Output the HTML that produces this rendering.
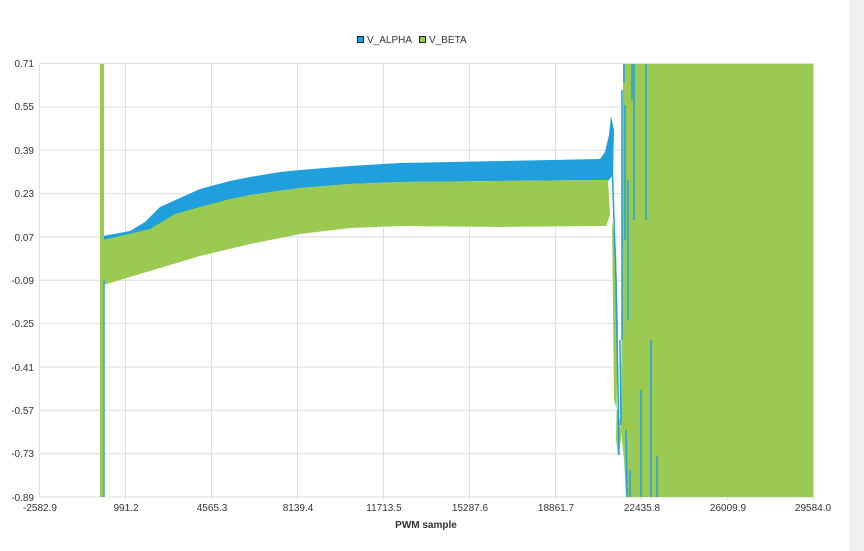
<!DOCTYPE html>
<html><head><style>
body{margin:0;width:864px;height:551px;background:#fff;overflow:hidden;font-family:"Liberation Sans",sans-serif;}
.side{position:absolute;left:849px;top:0;width:15px;height:551px;background:#f0f0f0;}
</style></head><body>
<div class="side"></div>
<svg width="864" height="551" style="position:absolute;left:0;top:0" font-family="Liberation Sans, sans-serif" font-size="10" fill="#333">
<g stroke="#dedede" stroke-width="1">
<line x1="40" y1="63.5" x2="813" y2="63.5"/><line x1="40" y1="106.9" x2="813" y2="106.9"/><line x1="40" y1="150.2" x2="813" y2="150.2"/><line x1="40" y1="193.6" x2="813" y2="193.6"/><line x1="40" y1="236.9" x2="813" y2="236.9"/><line x1="40" y1="280.3" x2="813" y2="280.3"/><line x1="40" y1="323.6" x2="813" y2="323.6"/><line x1="40" y1="367" x2="813" y2="367"/><line x1="40" y1="410.3" x2="813" y2="410.3"/><line x1="40" y1="453.7" x2="813" y2="453.7"/><line x1="40" y1="497" x2="813" y2="497"/>
<line x1="39.5" y1="63" x2="39.5" y2="497"/><line x1="125.5" y1="63" x2="125.5" y2="500"/><line x1="211.5" y1="63" x2="211.5" y2="500"/><line x1="297.5" y1="63" x2="297.5" y2="500"/><line x1="383.5" y1="63" x2="383.5" y2="500"/><line x1="469.5" y1="63" x2="469.5" y2="500"/><line x1="555.5" y1="63" x2="555.5" y2="500"/><line x1="641.5" y1="63" x2="641.5" y2="500"/><line x1="727.5" y1="63" x2="727.5" y2="500"/><line x1="813.5" y1="63" x2="813.5" y2="500"/>
</g>
<polygon fill="#1f9fdc" points="103,236 130,231 145,222 160,207 180,198 200,189 230,181 250,177 280,172 300,170 350,166 400,163 500,161 600,159 605,152 609,135 611,116 614,130 613,175 608,181 600,180 400,182 350,184 300,188 250,195 200,207 150,230 103,240"/>
<polygon fill="#9bca52" points="103,240 120,236 150,229 175,214 200,207 230,199 250,195 300,188 350,184 400,182 500,181 600,180 608,180 610,215 606,226 600,226 500,227 400,226 350,228 300,234 250,244 200,256 150,271 120,280 103,285"/>
<rect x="100" y="64" width="4" height="433" fill="#9bca52"/>
<rect x="103.5" y="280" width="1.2" height="217" fill="#1f9fdc"/>
<polygon fill="#9bca52" points="612,220 616,250 618,330 616,440 618,455 621,440 623,64 640,64 640,497 626,497 624,460 620,420 614,400"/>
<rect x="640" y="64" width="173" height="433" fill="#9bca52"/>
<g stroke="#1f9fdc" stroke-width="1.5">
<line x1="612" y1="160" x2="616" y2="280"/><line x1="616" y1="280" x2="618" y2="390"/><line x1="618" y1="390" x2="619" y2="455"/><line x1="620" y1="340" x2="621" y2="425"/>
<line x1="622" y1="90" x2="622" y2="340"/><line x1="624" y1="64" x2="624" y2="82"/><line x1="625" y1="105" x2="625" y2="240"/><line x1="626" y1="430" x2="627" y2="497"/>
<line x1="628" y1="180" x2="628" y2="320"/><line x1="630" y1="470" x2="630" y2="497"/><line x1="632" y1="64" x2="632" y2="100"/><line x1="634" y1="64" x2="634" y2="220"/><line x1="641" y1="390" x2="641" y2="497"/><line x1="646" y1="64" x2="646" y2="220"/><line x1="651" y1="340" x2="651" y2="497"/><line x1="657" y1="456" x2="657" y2="497"/>
</g>
<g text-anchor="end"><text x="34" y="67">0.71</text><text x="34" y="110">0.55</text><text x="34" y="154">0.39</text><text x="34" y="197">0.23</text><text x="34" y="241">0.07</text><text x="34" y="284">-0.09</text><text x="34" y="327">-0.25</text><text x="34" y="371">-0.41</text><text x="34" y="414">-0.57</text><text x="34" y="457">-0.73</text><text x="34" y="501">-0.89</text></g>
<g text-anchor="middle"><text x="40" y="511">-2582.9</text><text x="126" y="511">991.2</text><text x="212" y="511">4565.3</text><text x="298" y="511">8139.4</text><text x="384" y="511">11713.5</text><text x="470" y="511">15287.6</text><text x="556" y="511">18861.7</text><text x="642" y="511">22435.8</text><text x="728" y="511">26009.9</text><text x="813" y="511">29584.0</text></g>
<text x="426" y="528" text-anchor="middle" font-weight="bold">PWM sample</text>
<rect x="357.5" y="36.5" width="6" height="6" fill="#1f9fdc" stroke="#222"/>
<text x="367" y="43">V_ALPHA</text>
<rect x="419.5" y="36.5" width="6" height="6" fill="#9bca52" stroke="#222"/>
<text x="429" y="43">V_BETA</text>
</svg>
</body></html>
